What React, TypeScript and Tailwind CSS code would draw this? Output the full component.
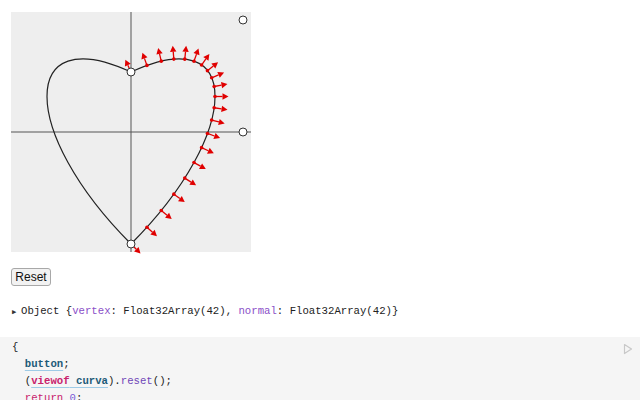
import React from "react";

function Heart() {
  const P0 = [120, 60], P1 = [232, 8], P2 = [232, 120], P3 = [120, 232];
  const arrows = [];
  for (let i = 0; i <= 20; i++) {
    const t = i / 20;
    const u = 1 - t;
    const x = u * u * u * P0[0] + 3 * u * u * t * P1[0] + 3 * u * t * t * P2[0] + t * t * t * P3[0];
    const y = u * u * u * P0[1] + 3 * u * u * t * P1[1] + 3 * u * t * t * P2[1] + t * t * t * P3[1];
    const dx = 3 * u * u * (P1[0] - P0[0]) + 6 * u * t * (P2[0] - P1[0]) + 3 * t * t * (P3[0] - P2[0]);
    const dy = 3 * u * u * (P1[1] - P0[1]) + 6 * u * t * (P2[1] - P1[1]) + 3 * t * t * (P3[1] - P2[1]);
    const len = Math.hypot(dx, dy);
    const nx = dy / len, ny = -dx / len;
    const L = 13.5, H = 6, W = 3.2;
    const bx = x + nx * (L - H), by = y + ny * (L - H);
    const tx = x + nx * L, ty = y + ny * L;
    const px = -ny, py = nx;
    arrows.push(
      <g key={i}>
        <line x1={x} y1={y} x2={bx} y2={by} stroke="#e00000" strokeWidth={1.3} />
        <polygon
          points={`${tx},${ty} ${bx + px * W},${by + py * W} ${bx - px * W},${by - py * W}`}
          fill="#e00000"
        />
        <circle cx={x} cy={y} r={1.8} fill="#e00000" />
      </g>
    );
  }
  return (
    <svg width={240} height={240} viewBox="0 0 240 240" className="block overflow-visible">
      <line x1={120} y1={0} x2={120} y2={240} stroke="#555" strokeWidth={1} />
      <line x1={0} y1={120} x2={240} y2={120} stroke="#555" strokeWidth={1} />
      <path
        d="M120,60 C232,8 232,120 120,232 C8,120 8,8 120,60"
        fill="none"
        stroke="#222"
        strokeWidth={1.2}
      />
      {arrows}
      {[P0, P1, P2, P3].map((p, i) => (
        <circle key={i} cx={p[0]} cy={p[1]} r={4} fill="#fff" stroke="#333" strokeWidth={1} />
      ))}
    </svg>
  );
}

export default function App() {
  const mono = { fontFamily: '"Liberation Mono", "DejaVu Sans Mono", monospace' };
  return (
    <div className="w-[640px] h-[400px] overflow-hidden bg-white flex flex-col">
      <div className="ml-[11px] mt-[12px] w-[240px] h-[240px] bg-[#eeeeee] shrink-0">
        <Heart />
      </div>
      <div className="ml-[11px] mt-[16px] flex">
        <button
          className="h-[18px] w-[40px] border border-[#a8a8a8] rounded-[3px] bg-[#f2f2f2] text-[12px] leading-[16px] text-[#111] flex items-center justify-center"
          style={{ fontFamily: '"Liberation Sans", Arial, sans-serif' }}
        >
          Reset
        </button>
      </div>
      <div className="ml-[12px] mt-[18px] flex items-center h-[16px] text-[10.66px] text-[#222]" style={mono}>
        <span className="text-[7px] w-[9px] text-[#333]">▶</span>
        <span className="whitespace-pre">
          Object {"{"}
          <span className="text-[#8a4fc8]">vertex</span>: Float32Array(42),{" "}
          <span className="text-[#8a4fc8]">normal</span>: Float32Array(42){"}"}
        </span>
      </div>
      <div className="mt-[17px] bg-[#f5f5f5] h-[80px] relative pt-[2px] pl-[12px] shrink-0">
        <div className="text-[10.66px] leading-[17px] text-[#222] whitespace-pre" style={mono}>
          <div>{"{"}</div>
          <div>
            {"  "}
            <span className="font-bold text-[#1d5a78] underline decoration-[#9ecbe6] underline-offset-[3px]">button</span>;
          </div>
          <div>
            {"  "}(
            <span className="underline decoration-[#9ecbe6] underline-offset-[3px]">
              <span className="font-bold text-[#c8216c]">viewof</span>{" "}
              <span className="font-bold text-[#1d5a78]">curva</span>
            </span>
            ).<span className="text-[#6f47b8]">reset</span>();
          </div>
          <div>
            {"  "}
            <span className="text-[#c8216c]">return</span> <span className="text-[#7c5cd6]">0</span>;
          </div>
        </div>
        <svg className="absolute left-[623px] top-[6px]" width={10} height={12} viewBox="0 0 10 12">
          <path d="M1.5,1.5 L8.5,6 L1.5,10.5 Z" fill="none" stroke="#c8c8c8" strokeWidth={1.2} strokeLinejoin="round" />
        </svg>
      </div>
    </div>
  );
}
